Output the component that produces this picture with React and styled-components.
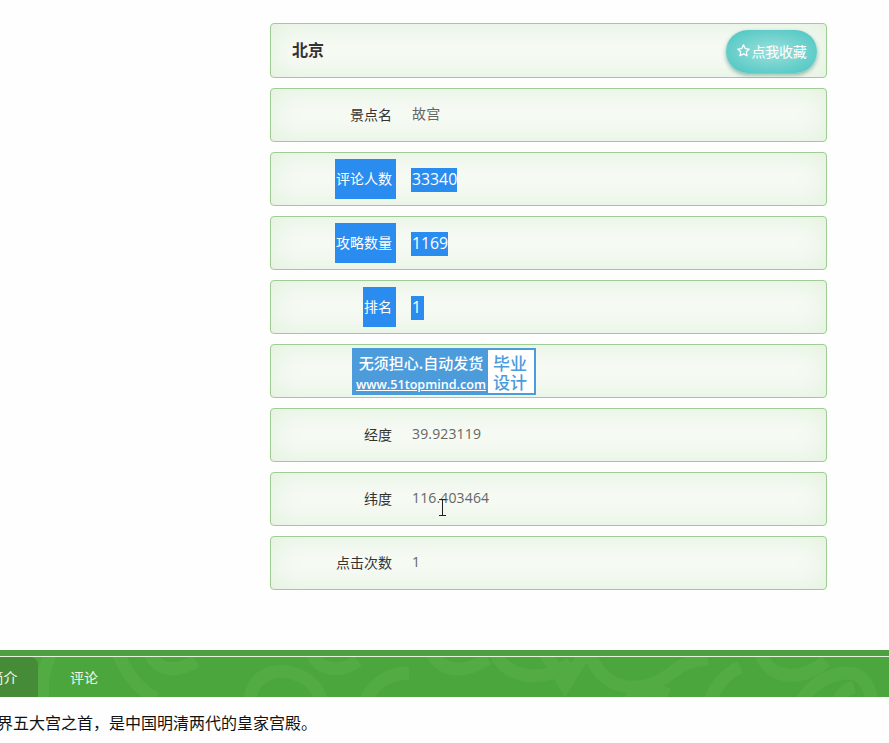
import React from 'react';
import styled, { createGlobalStyle } from 'styled-components';

const Global = createGlobalStyle`
  html, body { margin: 0; padding: 0; background: #fefefe; }
  body { font-family: "Open Sans", "Noto Sans CJK SC", sans-serif; overflow: hidden; }
`;
const Page = styled.div`
  width: 889px; height: 743px; overflow: hidden; position: relative;
  display: flex; flex-direction: column;
`;
const Column = styled.section`
  width: 557px; margin: 23px 0 0 270px;
  display: flex; flex-direction: column; gap: 10px;
`;
const Row = styled.div`
  box-sizing: border-box; height: ${p => p.$tall ? 55 : 54}px;
  border: 1px solid #9ccd93; border-radius: 4px;
  background: #f6faf4;
  box-shadow: inset 0 0 28px #e0f0db;
  display: flex; align-items: center; justify-content: ${p => p.$head ? 'space-between' : 'flex-start'};
  padding: ${p => p.$head ? '0 9px 0 21px' : '0'};
`;
const City = styled.h2`
  margin: 0 0 3px; font: 700 16px "Noto Sans CJK SC", sans-serif; color: #333;
`;
const Fav = styled.button`
  width: 91px; height: 43px; margin-top: 1px; padding: 0 0 1px; border: 0; border-radius: 22px;
  background: radial-gradient(ellipse at center, #9be0dc 0%, #5ccbc7 75%, #4fc2bf 100%);
  box-shadow: 0 2px 4px rgba(50,120,110,.55);
  color: #fff; font: 14px "Noto Sans CJK SC", sans-serif; letter-spacing: -.2px;
  display: flex; align-items: center; justify-content: center;
`;
const Star = styled.svg`width: 15px; height: 15px; flex: none;`;
const Label = styled.span`
  box-sizing: border-box; width: 121px; flex: none; padding-bottom: ${p => p.$flush ? 0 : 2}px;
  text-align: right; font: 14px/20px "Noto Sans CJK SC", sans-serif; color: #333;
  white-space: nowrap;
`;
const Selected = styled.mark`
  display: inline-block; box-sizing: border-box; background: #2b8cf0; color: #fff;
  height: ${p => p.$h}px; min-width: ${p => p.$minW || 0}px;
  font: inherit; line-height: ${p => p.$h - 2}px; padding: 0 ${p => p.$pr || 0}px 2px ${p => p.$pl || 0}px;
  margin: 0 ${p => p.$mr || 0}px 0 0; vertical-align: middle;
`;
const Value = styled.span`
  margin-left: 20px; padding-bottom: 2px;
  font: 14px/24px "Open Sans", "Noto Sans CJK SC", sans-serif;
  color: #666; letter-spacing: .15px;
`;
const SelectedValue = styled.span`
  margin-left: 19px; font: 15.8px/24px "Open Sans", sans-serif;
`;
const Ad = styled.a`
  margin-left: 81px; width: 184px; height: 47px; box-sizing: border-box; flex: none;
  background: #4c9cdc; display: flex; padding: 2px;
  justify-content: space-between; text-decoration: none;
`;
const AdLeft = styled.div`
  width: 134px; color: #fff; display: flex; flex-direction: column; align-items: center;
`;
const AdTop = styled.span`font: 500 15px/26px "Noto Sans CJK SC", sans-serif; white-space: nowrap;`;
const AdUrl = styled.span`font: 600 12.6px/17px "Open Sans", sans-serif; text-decoration: underline; white-space: nowrap;`;
const AdRight = styled.div`
  width: 46px; background: #fff; color: #4c9cdc; text-align: center;
  font: 500 17px/19px "Noto Sans CJK SC", sans-serif; padding: 3px 2px 0 0; box-sizing: border-box;
`;
const Cursor = styled.svg`position: absolute; left: 438px; top: 499px; width: 9px; height: 17px;`;
const Band = styled.nav`
  margin-top: 60px; height: 47px; box-sizing: border-box; position: relative; overflow: hidden;
  background: #4ba63e; border-top: 6px solid #4d9f42; display: flex; align-items: stretch;
  &::before { content: ""; position: absolute; left: 0; right: 0; top: 0; height: 1px; background: #e4f3dc; z-index: 2; }
`;
const Swirls = styled.svg`position: absolute; left: 0; top: 1px; width: 889px; height: 40px;`;
const Tab = styled.a`
  position: relative; z-index: 1; height: 40px; margin-top: 1px; box-sizing: border-box;
  width: ${p => p.$w}px; margin-left: ${p => p.$ml || 0}px; flex: none;
  display: flex; align-items: center; justify-content: center; white-space: nowrap;
  font: 14px "Noto Sans CJK SC", sans-serif; color: #f3f7ee;
  background: ${p => p.$active ? '#468c38' : 'transparent'};
  border-radius: ${p => p.$active ? '0 8px 0 0' : '0'};
`;
const ActiveText = styled.span`margin-left: -31px;`;
const Body = styled.p`
  margin: 15px 0 0 -19px; white-space: nowrap;
  font: 16px/20px "Noto Sans CJK SC", sans-serif; color: #111;
`;

const rows = [
  { l: '景点名', v: '故宫' },
  { l: '评论人数', v: '33340', sel: true },
  { l: '攻略数量', v: '1169', sel: true },
  { l: '排名', v: '1', sel: true },
  { ad: true },
  { l: '经度', v: '39.923119' },
  { l: '纬度', v: '116.403464' },
  { l: '点击次数', v: '1' },
];

export default function App() {
  return (
    <Page>
      <Global />
      <Column>
        <Row $tall $head>
          <City>北京</City>
          <Fav>
            <Star viewBox="0 0 24 24" fill="none" stroke="#fff" strokeWidth="2" strokeLinejoin="round">
              <path d="M12 3l2.8 5.9 6.4.8-4.7 4.4 1.2 6.4L12 17.4l-5.7 3.1 1.2-6.4L2.8 9.7l6.4-.8z" />
            </Star>
            点我收藏
          </Fav>
        </Row>
        {rows.map((r, i) => (
          <Row key={i}>
            {r.ad ? (
              <Ad>
                <AdLeft>
                  <AdTop>无须担心.自动发货</AdTop>
                  <AdUrl>www.51topmind.com</AdUrl>
                </AdLeft>
                <AdRight>毕业<br />设计</AdRight>
              </Ad>
            ) : r.sel ? (
              <>
                <Label $flush><Selected $h={40} $pl={1} $pr={4} $mr={-4}>{r.l}</Selected></Label>
                <SelectedValue><Selected $h={24} $pl={1} $minW={13}>{r.v}</Selected></SelectedValue>
              </>
            ) : (
              <>
                <Label>{r.l}</Label>
                <Value>{r.v}</Value>
              </>
            )}
          </Row>
        ))}
      </Column>
      <Cursor viewBox="0 0 9 17" fill="none" stroke="#222" strokeWidth="1">
        <path d="M1 .5h7M4.5.5v16M1 16.5h7" />
      </Cursor>
      <Band>
        <Swirls viewBox="0 0 889 40" fill="none" stroke="#52ac43" strokeWidth="13">
          <path d="M44 46c-4-18 0-34 6-48M118 -4c8 20 20 36 38 46M150 -4c6 16 24 22 46 8" />
          <path d="M250 46c0-24 20-36 42-30 16 4 26 14 30 30M312 -4c6 16 26 22 46 8M365 46c6-18 22-30 44-30M432 -4c10 18 30 22 56 6" />
          <path d="M495 -4c12 24 44 32 76 10M545 -4l20 32 20-32M590 -4c10 36 50 46 84 18 10-8 20-12 34-12M628 46c8-14 26-16 40-8M710 46c4-16 14-28 30-36" />
          <path d="M760 -4c10 26 40 30 66 8M800 46c12-20 30-30 48-30 14 0 22 12 24 30M838 46c2-8 8-14 16-16" />
        </Swirls>
        <Tab $active $w={38}><ActiveText>简介</ActiveText></Tab>
        <Tab $w={60} $ml={16}>评论</Tab>
      </Band>
      <Body>世界五大宫之首，是中国明清两代的皇家宫殿。</Body>
    </Page>
  );
}
